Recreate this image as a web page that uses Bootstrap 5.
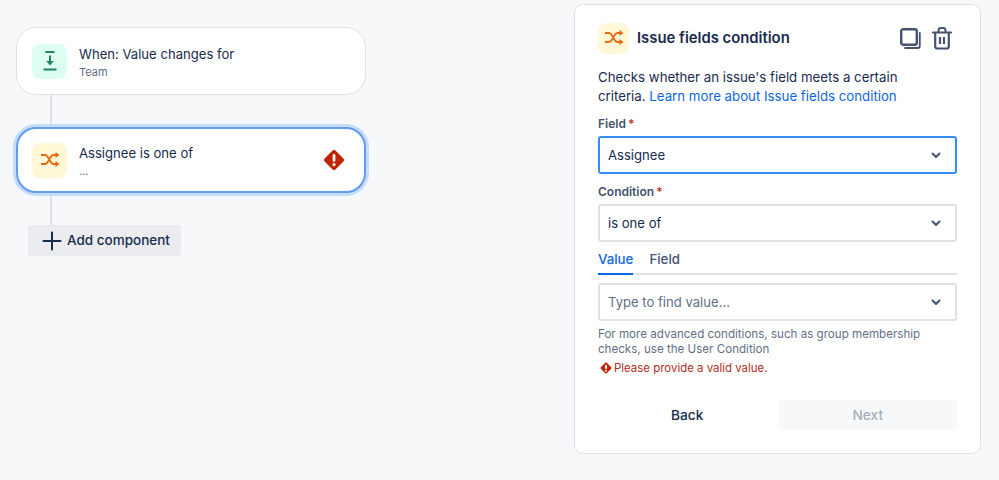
<!doctype html>
<html lang="en">
<head>
<meta charset="utf-8">
<title>Issue fields condition</title>
<link href="https://cdn.jsdelivr.net/npm/bootstrap@5.3.0/dist/css/bootstrap.min.css" rel="stylesheet">
<style>
html,body{height:480px;overflow:hidden}
body{background:#f7f8f9;font-family:Inter,"Liberation Sans",sans-serif;color:#172b4d;font-size:13.25px}
.stage{height:480px;padding:4px 18px 0 16px}
.flow{width:350px;padding-top:23px}
.rule-card{height:68px;border:1px solid #dfe1e6;border-radius:20px;padding:0 15px;box-shadow:none;gap:12px;background:#fff}
.rule-card.picked{height:66px;border:2px solid #5f9bf7;padding:0 14px;box-shadow:0 0 0 3px #c5dcfd}
.tile{width:35px;height:35px;border-radius:8px;flex:none}
.tile-green{background:#dcfff1;color:#1f845a}
.tile-amber{background:#fff7d6;color:#e56910}
.tile-sm{width:31px;height:31px}
.card-name{font-size:13.1px;line-height:20px;color:#172b4d;padding-top:1px}
.card-sub{font-size:11px;line-height:14px;color:#626f86;margin-top:1px}
.card-alert{margin-right:5px;flex:none}
.link-line{width:2px;height:32px;background:#dcdfe4;margin-left:34px}
.add-btn{margin-left:12px;width:153px;height:31px;background:#ebecf0;border:0;border-radius:3px;color:#172b4d;font-size:13.5px;font-weight:500;padding:0 0 0 14px;gap:5px}
.add-btn:hover{background:#ebecf0;color:#172b4d}
.panel{width:407px;height:450px;margin-top:0;border:1px solid #dfe1e6;border-radius:9px;background:#fff;padding:17px 23px 0}
.panel-head{height:32px;gap:8px}
.panel-title{font-size:14.85px;font-weight:600;margin:0;color:#172b4d;line-height:32px}
.head-icons{gap:11px;color:#44546f;margin-right:5px}
.intro{margin:14px 0 0;line-height:19px;color:#172b4d;max-width:320px}
.intro a{color:#0c66e4;text-decoration:none}
.fld-label{display:block;font-size:12px;font-weight:600;color:#44546f;line-height:16px;margin:0 0 4px}
.fld-label b{color:#c9372c;font-weight:600;margin-left:2px}
.fld-first{margin-top:10px}
.fld-next{margin-top:10px}
.pick.form-select{height:38px;border:2px solid #dfe1e6;border-radius:3px;padding:2px 30px 0 8px;font-size:13.1px;color:#172b4d;box-shadow:none;background-position:right 11px center;background-size:16px 16px;background-image:url("data:image/svg+xml,%3Csvg xmlns='http://www.w3.org/2000/svg' viewBox='0 0 16 16'%3E%3Cpath d='M4.500 6.500 8 10l3.500-3.500' fill='none' stroke='%2344546f' stroke-width='2' stroke-linecap='round' stroke-linejoin='round'/%3E%3C/svg%3E")}
.pick.on{border-color:#388bff}
.pick.muted{color:#626f86}
.tabbar{border-bottom:2px solid #dfe1e6;height:31px;margin-top:2px;gap:16px}
.tabbar .nav-link{padding:0;height:31px;line-height:30px;font-size:13.3px;font-weight:500;color:#44546f;border-bottom:2px solid transparent}
.tabbar .nav-link.active{color:#0c66e4;border-bottom-color:#0c66e4}
.tab-body{margin-top:8px}
.help{font-size:11.6px;line-height:15.5px;color:#626f86;margin:5.5px 0 0}
.err{font-size:11.45px;line-height:16px;color:#ae2e24;margin-top:2.5px;gap:2px;padding-left:2px}
.foot{margin-top:24px;gap:2px}
.foot .btn{flex:1;height:30px;padding:0;border:0;border-radius:3px;font-size:13.7px;font-weight:500;line-height:30px}
.btn-back{color:#172b4d;background:transparent}
.btn-next,.btn-next:disabled{background:#f7f8f9;color:#a5adba;opacity:1}
</style>
</head>
<body>
<div class="stage d-flex justify-content-between align-items-start">
  <div class="flow">
    <div class="card rule-card flex-row align-items-center">
      <span class="tile tile-green d-flex align-items-center justify-content-center">
        <svg width="20" height="24" viewBox="0 0 20 24"><path d="M5.500 3h9M3.500 20.500h13" stroke="currentColor" stroke-width="2" fill="none"/><path d="M10 6.500v7" stroke="currentColor" stroke-width="2"/><path d="M6.200 12h7.600L10 16.500z" fill="currentColor"/></svg>
      </span>
      <div>
        <div class="card-name">When: Value changes for</div>
        <div class="card-sub">Team</div>
      </div>
    </div>
    <div class="link-line"></div>
    <div class="card rule-card picked flex-row align-items-center">
      <span class="tile tile-amber d-flex align-items-center justify-content-center">
        <svg width="20" height="18" viewBox="0 0 20 18"><path d="M1 4h3.500c1.500 0 2.300.6 3.100 1.800l3.300 5.400c.8 1.200 1.600 1.800 3.100 1.800H17M1 13h3.500c1.500 0 2.300-.6 3.100-1.800l3.300-5.400C11.700 4.600 12.500 4 14 4h3" fill="none" stroke="currentColor" stroke-width="1.800"/><path d="M15.500 1 19.500 4l-4 3zM15.500 10l4 3-4 3z" fill="currentColor"/></svg>
      </span>
      <div class="flex-grow-1">
        <div class="card-name">Assignee is one of</div>
        <div class="card-sub">...</div>
      </div>
      <svg width="22" height="22" viewBox="0 0 24 24" class="card-alert"><path d="M10.400 1.700 1.700 10.400a2.300 2.300 0 0 0 0 3.200l8.700 8.700a2.300 2.300 0 0 0 3.200 0l8.700-8.700a2.300 2.300 0 0 0 0-3.200l-8.700-8.700a2.300 2.300 0 0 0-3.200 0z" fill="#bf2600"/><rect x="10.500" y="5.500" width="3" height="8.500" rx="1.500" fill="#fff"/><circle cx="12" cy="17" r="1.700" fill="#fff"/></svg>
    </div>
    <div class="link-line"></div>
    <button type="button" class="btn add-btn d-flex align-items-center">
      <svg width="20" height="20" viewBox="0 0 20 20"><path d="M10 1.500v17M1.500 10h17" stroke="currentColor" stroke-width="2" stroke-linecap="round"/></svg>
      <span>Add component</span>
    </button>
  </div>
  <div class="card panel">
    <div class="panel-head d-flex align-items-center">
      <span class="tile tile-amber tile-sm d-flex align-items-center justify-content-center">
        <svg width="20" height="18" viewBox="0 0 20 18"><path d="M1 4h3.500c1.500 0 2.300.6 3.100 1.800l3.300 5.400c.8 1.200 1.600 1.800 3.100 1.800H17M1 13h3.500c1.500 0 2.300-.6 3.100-1.800l3.300-5.400C11.700 4.600 12.500 4 14 4h3" fill="none" stroke="currentColor" stroke-width="1.800"/><path d="M15.500 1 19.500 4l-4 3zM15.500 10l4 3-4 3z" fill="currentColor"/></svg>
      </span>
      <h2 class="panel-title flex-grow-1">Issue fields condition</h2>
      <div class="head-icons d-flex align-items-center">
        <svg width="21" height="21" viewBox="0 0 21 21"><rect x="1.200" y="1.200" width="15.600" height="15.600" rx="2" fill="none" stroke="currentColor" stroke-width="2.400"/><path d="M19.800 5v13a2 2 0 0 1-2 2H5" fill="none" stroke="currentColor" stroke-width="1.800" stroke-linecap="round"/></svg>
        <svg width="20" height="23" viewBox="0 0 20 23"><path d="M1 5.500h18" stroke="currentColor" stroke-width="2.200" stroke-linecap="round"/><path d="M6.500 5V3.500a2.500 2.500 0 0 1 2.500-2.400h2a2.500 2.500 0 0 1 2.500 2.400V5" fill="none" stroke="currentColor" stroke-width="2"/><path d="M3.200 6v13.500a2 2 0 0 0 2 2h9.600a2 2 0 0 0 2-2V6" fill="none" stroke="currentColor" stroke-width="2.200"/><path d="M8 10v7M12 10v7" stroke="currentColor" stroke-width="2.200"/></svg>
      </div>
    </div>
    <p class="intro">Checks whether an issue's field meets a certain criteria. <a href="#">Learn more about Issue fields condition</a></p>
    <div class="fld-first">
      <label class="fld-label" for="f1">Field<b>*</b></label>
      <select id="f1" class="form-select pick on"><option>Assignee</option></select>
    </div>
    <div class="fld-next">
      <label class="fld-label" for="f2">Condition<b>*</b></label>
      <select id="f2" class="form-select pick"><option>is one of</option></select>
    </div>
    <ul class="nav tabbar">
      <li class="nav-item"><a class="nav-link active" href="#">Value</a></li>
      <li class="nav-item"><a class="nav-link" href="#">Field</a></li>
    </ul>
    <div class="tab-body">
      <select class="form-select pick muted" aria-label="Value"><option>Type to find value...</option></select>
      <p class="help">For more advanced conditions, such as group membership checks, use the User Condition</p>
      <div class="err d-flex align-items-center">
        <svg width="12" height="12" viewBox="0 0 24 24"><path d="M10.400 1.700 1.700 10.400a2.300 2.300 0 0 0 0 3.200l8.700 8.700a2.300 2.300 0 0 0 3.200 0l8.700-8.700a2.300 2.300 0 0 0 0-3.200l-8.700-8.700a2.300 2.300 0 0 0-3.200 0z" fill="#bf2600"/><rect x="10" y="5.500" width="4" height="8.500" rx="2" fill="#fff"/><circle cx="12" cy="17.500" r="2" fill="#fff"/></svg>
        <span>Please provide a valid value.</span>
      </div>
    </div>
    <div class="foot d-flex">
      <button type="button" class="btn btn-back">Back</button>
      <button type="button" class="btn btn-next" disabled>Next</button>
    </div>
  </div>
</div>
</body>
</html>
